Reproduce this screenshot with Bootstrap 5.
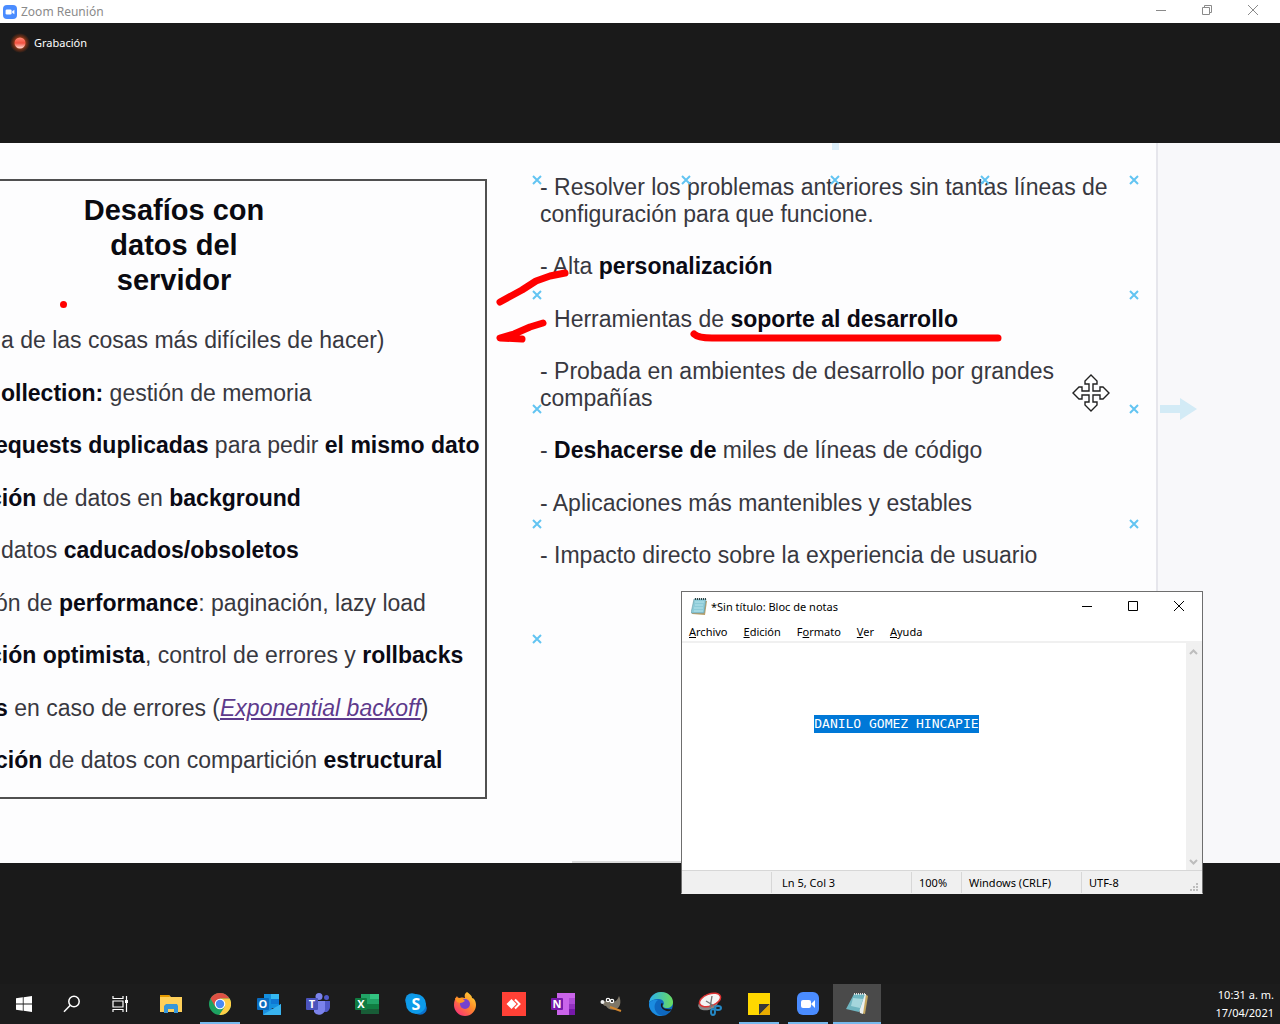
<!DOCTYPE html>
<html lang="es">
<head>
<meta charset="utf-8">
<meta name="viewport" content="width=device-width, initial-scale=1">
<title>Zoom Reunión</title>
<link href="https://cdn.jsdelivr.net/npm/bootstrap@5.3.0/dist/css/bootstrap.min.css" rel="stylesheet">
<style>
body { background: #1a1a1a; font: 12px/16px "Noto Sans", "Open Sans", sans-serif; overflow-x: hidden; }
button { border: 0; background: none; padding: 0; }
svg { display: block; flex: none; }
.ui-text { font-size: 11px; line-height: 16px; }
.win-title { height: 23px; padding-left: 3px; color: #8a8a8a; background: #fff; }
.win-title button { width: 46px; height: 20px; color: #8a8a8a; }
.rec-bar { height: 120px; padding: 12px; color: #fff; }
.slide { height: 720px; background: #f8f8fa; font: 23px/27px "Liberation Sans", Arial, sans-serif; color: #383840; }
.board { width: 1158px; background: #fdfdfe; border-right: 2px solid #e6e6ec; }
.challenge { width: 487px; height: 620px; margin-top: 36px; border: solid #505050; border-width: 2px 2px 2px 0; white-space: nowrap; }
.challenge h1 { width: 348px; margin: 12px 0 0; padding: 0; font-size: 29px; line-height: 35px; font-weight: 700; color: #0a0a10; }
.challenge ul { height: 447px; margin-top: 29px; }
.benefits { width: 580px; height: 395px; margin: 31px 0 0 53px; }
.slide strong { color: #0a0a14; }
.slide a { color: #5d3a8c; }
.cut-none { margin-left: 1px; }
.cut-s { margin-left: -5px; }
.cut-l { margin-left: -11px; }
.ink { left: 0; top: 0; pointer-events: none; }
.notepad { left: 681px; top: 591px; width: 522px; height: 303px; background: #fff; border: 1px solid #6e6e6e; border-bottom-color: #f0f0f0; color: #000; }
.np-title { height: 30px; padding-left: 9px; }
.np-title button { width: 46px; height: 28px; }
.np-menu { height: 21px; padding-left: 7px; gap: 16px; border-bottom: 2px solid #f0f0f0; }
.np-menu button { font-size: 11px; line-height: 16px; color: #000; }
.np-text { border: 0; outline: 0; resize: none; overflow: hidden; padding: 0 7px; font: 13px/18px "DejaVu Sans Mono", monospace; white-space: pre; color: #000; }
.np-text::selection { background: #0078d7; color: #fff; }
.np-scroll { width: 16px; background: #f0f0f0; padding: 6px 0 5px 3px; }
.np-status { height: 23px; background: #f0f0f0; border-top: 1px solid #d7d7d7; }
.np-status span { border-left: 1px solid #d7d7d7; padding: 3px 0 0 7px; margin-top: 1px; }
.np-status .s-pos { width: 140px; padding-left: 10px; margin-left: 89px; }
.np-status .s-zoom { width: 50px; }
.np-status .s-eol { width: 120px; }
.np-status .s-enc { flex: 1; }
.taskbar { height: 40px; background: #1c1c1c; }
.taskbar button { width: 48px; height: 40px; border-bottom: 3px solid transparent; padding-top: 2px; }
.taskbar svg { margin: 0 auto; }
.apps { gap: 1px; margin-left: 3px; }
.taskbar .is-open { background: linear-gradient(#76b9ed, #76b9ed) center bottom / 40px 2px no-repeat; background-origin: border-box; background-clip: border-box; }
.taskbar .is-active { background: linear-gradient(#76b9ed, #76b9ed) center bottom / 48px 2px no-repeat #4a4a4a; background-origin: border-box; background-clip: border-box; }
.clock { color: #fff; line-height: 18px; padding: 2px 6px 0 0; }
svg text { font-family: "Open Sans", sans-serif; font-weight: 700; fill: #fff; text-anchor: middle; }
</style>
<script src="https://cdn.jsdelivr.net/npm/bootstrap@5.3.0/dist/js/bootstrap.bundle.min.js"></script>
</head>
<body class="d-flex flex-column min-vh-100">
<header class="win-title d-flex align-items-center">
  <svg class="me-1" width="14" height="14" viewBox="0 0 14 14"><rect width="14" height="14" rx="4" fill="#4a8cff"/><rect x="2.600" y="4.500" width="6" height="5" rx="1.300" fill="#fff"/><path d="M9.200 6.300 11.400 4.700v4.600L9.200 7.700z" fill="#fff"/></svg>
  <span>Zoom Reunión</span>
  <div class="d-flex ms-auto pe-0 me-0 align-self-start">
    <button type="button" aria-label="Minimizar"><svg class="mx-auto" width="12" height="12" stroke="currentColor"><path d="M1 6.500h10"/></svg></button>
    <button type="button" aria-label="Restaurar"><svg class="mx-auto" width="12" height="12" fill="none" stroke="currentColor"><path d="M1.500 3.500h7v7h-7zM3.500 3.500v-2h7v7h-2"/></svg></button>
    <button type="button" aria-label="Cerrar" class="me-1"><svg class="mx-auto" width="12" height="12" stroke="currentColor"><path d="m1 1 10 10M11 1 1 11"/></svg></button>
  </div>
</header>

<div class="rec-bar d-flex align-items-start ui-text">
  <svg width="18" height="18" viewBox="0 0 18 18" class="me-1 overflow-visible"><defs><radialGradient id="glow"><stop offset=".4" stop-color="#b5441a"/><stop offset="1" stop-color="#a53a10" stop-opacity="0"/></radialGradient><linearGradient id="lamp" x2="0" y2="1"><stop stop-color="#ff8a78"/><stop offset=".5" stop-color="#f3503f"/><stop offset="1" stop-color="#ffe0d8"/></linearGradient></defs><circle cx="8" cy="8" r="10" fill="url(#glow)"/><circle cx="8" cy="8" r="5.500" fill="url(#lamp)"/></svg>
  <span>Grabación</span>
</div>

<main class="slide position-relative overflow-hidden">
  <div class="board d-flex align-items-start h-100">
    <section class="challenge flex-shrink-0">
      <h1 class="text-center">Desafíos con<br>datos del<br>servidor</h1>
      <ul class="list-unstyled mb-0 d-flex flex-column justify-content-between">
        <li class="cut-none">a de las cosas más difíciles de hacer)</li>
        <li class="cut-none"><strong>ollection:</strong> gestión de memoria</li>
        <li class="cut-s"><strong>equests duplicadas</strong> para pedir <strong>el mismo dato</strong></li>
        <li class="cut-l"><strong>ción</strong> de datos en <strong>background</strong></li>
        <li class="cut-none">datos <strong>caducados/obsoletos</strong></li>
        <li class="cut-s">ón de <strong>performance</strong>: paginación, lazy load</li>
        <li class="cut-l"><strong>ción optimista</strong>, control de errores y <strong>rollbacks</strong></li>
        <li class="cut-s"><strong>s</strong> en caso de errores (<a href="#backoff"><em>Exponential backoff</em></a>)</li>
        <li class="cut-s"><strong>ción</strong> de datos con compartición <strong>estructural</strong></li>
      </ul>
    </section>
    <ul class="benefits list-unstyled d-flex flex-column justify-content-between">
      <li>- Resolver los problemas anteriores sin tantas líneas de configuración para que funcione.</li>
      <li>- Alta <strong>personalización</strong></li>
      <li>- Herramientas de <strong>soporte al desarrollo</strong></li>
      <li>- Probada en ambientes de desarrollo por grandes compañías</li>
      <li>- <strong>Deshacerse de</strong> miles de líneas de código</li>
      <li>- Aplicaciones más mantenibles y estables</li>
      <li>- Impacto directo sobre la experiencia de usuario</li>
    </ul>
  </div>
  <svg class="ink position-absolute" width="1280" height="720" viewBox="0 143 1280 720" fill="none" aria-hidden="true">
    <defs><path id="pin" d="m-4-4 8 8M4-4l-8 8" stroke="#62c4f2" stroke-width="2"/></defs>
    <path d="M539 324h8" stroke="#fdfdfe" stroke-width="8"/>
    <path d="M832 143h7v7h-7z" fill="#dceefa"/>
    <path d="M1160 405h20v-7l17 11-17 11v-7h-20z" fill="#d3ebf6"/>
    <path d="M572 862h110" stroke="#dcdcdc" stroke-width="2"/>
    <use href="#pin" x="537" y="180"/><use href="#pin" x="686" y="180"/><use href="#pin" x="835" y="180"/><use href="#pin" x="985" y="180"/><use href="#pin" x="1134" y="180"/>
    <use href="#pin" x="537" y="295"/><use href="#pin" x="537" y="409"/><use href="#pin" x="537" y="524"/><use href="#pin" x="537" y="639"/>
    <use href="#pin" x="1134" y="295"/><use href="#pin" x="1134" y="409"/><use href="#pin" x="1134" y="524"/>
    <g stroke="#f00" stroke-width="7" stroke-linecap="round" stroke-linejoin="round">
      <path d="M500 302 522 290 536 281 550 276 565 273"/>
      <path d="M543 323 530 327 514 334 500 338 522 339"/>
      <path d="M694 334Q698 338 712 338H998"/>
    </g>
    <circle cx="63.500" cy="304.500" r="3.500" fill="#f00"/>
    <path d="M1091 375 1097 381V384H1093V391H1100V387H1103L1109 393 1103 399H1100V395H1093V402H1097V405L1091 411 1085 405V402H1089V395H1082V399H1079L1073 393 1079 387H1082V391H1089V384H1085V381Z" fill="#fff" stroke="#222" stroke-width="1.400"/>
  </svg>
</main>

<section class="notepad position-absolute d-flex flex-column" aria-label="Bloc de notas">
  <div class="np-title d-flex align-items-center ui-text">
    <svg width="16" height="18" viewBox="0 0 16 18" class="me-1"><path d="m3 2 13 1-2 14-13-1z" fill="#b9a06a"/><path d="M3 1h12l-2 14H0z" fill="#8ccbd8" stroke="#6899a5" stroke-width=".6"/><path d="M4 4h9M4 7h8M3 10h9M3 13h9" stroke="#b6e3eb"/><path d="M4 1h11" stroke="#344" stroke-width="2" stroke-dasharray="1 1"/></svg>
    <span>*Sin título: Bloc de notas</span>
    <div class="d-flex ms-auto align-self-start">
      <button type="button" aria-label="Minimizar"><svg class="mx-auto" width="12" height="12" stroke="#000"><path d="M1 6.500h10"/></svg></button>
      <button type="button" aria-label="Maximizar"><svg class="mx-auto" width="12" height="12" fill="none" stroke="#000"><path d="M1.500 1.500h9v9h-9z"/></svg></button>
      <button type="button" aria-label="Cerrar"><svg class="mx-auto" width="12" height="12" stroke="#000"><path d="m1 1 10 10M11 1 1 11"/></svg></button>
    </div>
  </div>
  <nav class="np-menu d-flex align-items-center" aria-label="Menú">
    <button type="button"><u>A</u>rchivo</button><button type="button"><u>E</u>dición</button><button type="button">F<u>o</u>rmato</button><button type="button"><u>V</u>er</button><button type="button"><u>A</u>yuda</button>
  </nav>
  <div class="d-flex flex-grow-1">
    <textarea class="np-text flex-grow-1" id="note" aria-label="Editor de texto" spellcheck="false">




		DANILO GOMEZ HINCAPIE</textarea>
    <div class="np-scroll d-flex flex-column justify-content-between" aria-hidden="true">
      <svg width="9" height="6" fill="none" stroke="#bdbdbd" stroke-width="2"><path d="m1 5 3.500-3.500L8 5"/></svg>
      <svg width="9" height="6" fill="none" stroke="#bdbdbd" stroke-width="2"><path d="m1 1 3.500 3.500L8 1"/></svg>
    </div>
  </div>
  <footer class="np-status d-flex ui-text">
    <span class="s-pos">Ln 5, Col 3</span><span class="s-zoom">100%</span><span class="s-eol">Windows (CRLF)</span><span class="s-enc">UTF-8</span>
    <svg class="align-self-end me-1" width="8" height="10" fill="#bdbdbd"><path d="M6 0h2v2H6zM3 3h2v2H3zM6 3h2v2H6zM0 6h2v2H0zM3 6h2v2H3zM6 6h2v2H6z"/></svg>
  </footer>
</section>

<footer class="taskbar d-flex mt-auto">
  <button type="button" aria-label="Inicio"><svg width="16" height="16" fill="#fff"><path d="M0 2.300 6.800 1.300V7.600H0zM7.600 1.200 16 0v7.600H7.600zM0 8.400h6.800v6.300L0 13.700zM7.600 8.400H16V16l-8.400-1.200z"/></svg></button>
  <button type="button" aria-label="Buscar"><svg width="18" height="18" fill="none" stroke="#fff" stroke-width="1.500"><circle cx="11" cy="6.500" r="5.200"/><path d="M7.300 10.200 1 16.700"/></svg></button>
  <button type="button" aria-label="Vista de tareas"><svg width="17" height="16" fill="none" stroke="#fff" stroke-width="1.200"><path d="M1 0v2.500h10V0M1 16v-2.500h10V16M1 5h10v6H1zM14.500 0v16"/><path d="M13 4h3v3h-3z" fill="#fff" stroke="none"/></svg></button>
  <div class="apps d-flex">
    <button type="button" aria-label="Explorador"><svg width="22" height="20"><path d="M0 1h9l2 2h11v15H0z" fill="#ffd05a"/><path d="M0 1h9l1 2H0z" fill="#e59a00"/><path d="M4 19v-7l2-2h11l1 2v7h-4v-4H8v4z" fill="#3897d8"/></svg></button>
    <button type="button" class="is-open" aria-label="Chrome"><svg width="22" height="22" viewBox="0 0 22 22"><circle cx="11" cy="11" r="11" fill="#1da261"/><path d="M11 0a11 11 0 0 1 9.600 5.600H11L6.300 13.700 1.500 5.500A11 11 0 0 1 11 0z" fill="#dd5144"/><path d="M20.600 5.600A11 11 0 0 1 10.300 22l5.400-8.300L11 5.600z" fill="#ffcd46"/><circle cx="11" cy="11" r="5.300" fill="#fff"/><circle cx="11" cy="11" r="4.200" fill="#4a8af4"/></svg></button>
    <button type="button" aria-label="Outlook"><svg width="24" height="22" viewBox="0 0 24 22"><path d="M7 1h15v14H7z" fill="#1490df"/><path d="M14 1h8v5h-8z" fill="#35b8f1"/><path d="M14 6h8v5h-8z" fill="#0f78d4"/><path d="M6 12h2l8 4 8-5v11H6z" fill="#1a8fe0"/><path d="m7 21 17-10v11H7z" fill="#39b4ef"/><rect y="5" width="12" height="12" rx="1" fill="#0a6cbf"/><text x="6" y="15" font-size="11">O</text></svg></button>
    <button type="button" aria-label="Teams"><svg width="24" height="22" viewBox="0 0 24 22"><circle cx="13" cy="3.500" r="3.500" fill="#7b83eb"/><circle cx="20.500" cy="4.500" r="2.500" fill="#5059c9"/><path d="M16 8h8v6a5 5 0 0 1-6 5z" fill="#5059c9"/><path d="M8 8h11v7a6 6 0 0 1-11 4z" fill="#7b83eb"/><rect y="5" width="12" height="12" rx="1" fill="#4b53bc"/><text x="6" y="15" font-size="11">T</text></svg></button>
    <button type="button" aria-label="Excel"><svg width="24" height="22" viewBox="0 0 24 22"><path d="M6 1h18v20H6z" fill="#21a366"/><path d="M15 1h9v5h-9z" fill="#33c481"/><path d="M6 11h18v5H6z" fill="#107c41"/><path d="M6 16h18v5H6z" fill="#185c37"/><rect y="5" width="12" height="12" rx="1" fill="#107c41"/><text x="6" y="15" font-size="11">X</text></svg></button>
    <button type="button" aria-label="Skype"><svg width="22" height="22" viewBox="0 0 22 22"><circle cx="7" cy="7" r="6.800" fill="#1296e4"/><circle cx="15" cy="15" r="6.800" fill="#0a72cf"/><circle cx="11" cy="11" r="10" fill="#0d9bea"/><text x="11" y="17" font-size="16">S</text></svg></button>
    <button type="button" aria-label="Firefox"><svg width="24" height="24" viewBox="0 0 24 24"><defs><linearGradient id="fx" x1="1" x2=".2" y2="1"><stop stop-color="#ffe43b"/><stop offset=".5" stop-color="#ff8a28"/><stop offset="1" stop-color="#f8307a"/></linearGradient></defs><path d="M14 0c4 3 5 4 5 6 2 0 4 3 4 7a11 11 0 0 1-22 0C1 9 2 7 4 4c1 2 1 2 3 2 2-1 4 0 5 0-1-3 0-5 2-6z" fill="url(#fx)"/><circle cx="12" cy="12" r="5" fill="#7542d0"/><path d="M2 6c4-1 8 0 10 3-2 1-3 2-5 2l-3-1z" fill="#ff9726"/></svg></button>
    <button type="button" aria-label="AnyDesk"><svg width="24" height="24"><path d="M0 0h24v24H0z" fill="#ff4136"/><path d="m4.500 12 5-5 5 5-5 5z" fill="#fff"/><path d="m13 7.500 4.500 4.500-4.500 4.500" fill="none" stroke="#fff" stroke-width="2"/></svg></button>
    <button type="button" aria-label="OneNote"><svg width="24" height="22" viewBox="0 0 24 22"><path d="M6 0h18v22H6z" fill="#ca64ea"/><path d="M18 5h6v6h-6z" fill="#ae4bd5"/><path d="M18 11h6v5h-6z" fill="#9332bf"/><path d="M18 16h6v6h-6z" fill="#7719aa"/><rect y="5" width="12" height="12" rx="1" fill="#7719aa"/><text x="6" y="15" font-size="11">N</text></svg></button>
    <button type="button" aria-label="GIMP"><svg width="24" height="18" viewBox="0 0 24 18"><path d="M2 6c3 1 4 0 5-1l5 2c4 0 6-3 7-6 2 4 2 9-1 12-4 3-10 2-12-2-2 0-4-2-4-5z" fill="#7d7668"/><circle cx="8" cy="5" r="2.300" fill="#fff"/><circle cx="12" cy="6" r="2.300" fill="#fff"/><circle cx="8" cy="5" r="1"/><circle cx="12" cy="6" r="1"/><circle cx="2.500" cy="7" r="2" fill="#eee"/><path d="m10 12 11 4" stroke="#d3862e" stroke-width="2"/></svg></button>
    <button type="button" aria-label="Edge"><svg width="24" height="24" viewBox="0 0 24 24"><defs><linearGradient id="ed"><stop stop-color="#2aaff0"/><stop offset="1" stop-color="#6bdc5c"/></linearGradient></defs><circle cx="12" cy="12" r="12" fill="#0e68c0"/><path d="M0 11C1 4 6 0 12 0c7 0 12 5 12 10 0 4-3 6-6 6-4 0-5-2-3-4 0-4-3-5-6-5-4 0-8 2-9 4z" fill="url(#ed)"/><path d="M9 8c-6 4-4 15 5 16C8 25 0 20 0 12 1 9 5 7 9 8z" fill="#1b8de0"/><path d="M14 12c-2 3 1 6 9 5l-2 2c-5 1-10-3-9-7 0-1 2-1 2 0z" fill="#1c1c1c"/></svg></button>
    <button type="button" aria-label="Recortes"><svg width="24" height="24" viewBox="0 0 24 24"><ellipse cx="10" cy="12" rx="10" ry="6" transform="rotate(-15 10 12)" fill="#888"/><ellipse cx="12" cy="8" rx="11" ry="6" transform="rotate(-20 12 8)" fill="#f4f4f4" stroke="#d33" stroke-width="1.500"/><path d="m8 9 10 6M14 4l-2 12" stroke="#777" stroke-width="1.400"/><g fill="none" stroke="#2487c4" stroke-width="2"><ellipse cx="20" cy="16" rx="3" ry="2"/><ellipse cx="15" cy="20" rx="2" ry="3"/></g></svg></button>
    <button type="button" class="is-open" aria-label="Notas rápidas"><svg width="22" height="22"><path d="M0 0h22v22H0z" fill="#ffd700"/><path d="M11 11h11L11 22z" fill="#383838"/><path d="M22 11v11H11z" fill="#e8ab00"/></svg></button>
    <button type="button" class="is-open" aria-label="Zoom"><svg width="24" height="24"><rect x="1" width="22" height="23" rx="6" fill="#4a8cff"/><rect x="5" y="8" width="10" height="8" rx="2" fill="#fff"/><path d="m15 12 4-4v8z" fill="#fff"/></svg></button>
    <button type="button" class="is-active" aria-label="Bloc de notas"><svg width="24" height="22" viewBox="0 0 24 22"><path d="m20 1 3 2-3 18-4-1z" fill="#c4a55d"/><path d="M9 1h12l-3 20-3-1z" fill="#e9f0ef"/><path d="M9 1h11l-6 18-13-3z" fill="#6fb5c0"/><path d="m8 5 10 1-3 9-9-2z" fill="#a4d6dc"/><path d="M9 1h12" stroke="#ddd" stroke-width="2" stroke-dasharray="1 1"/></svg></button>
  </div>
  <div class="clock ms-auto text-end ui-text">10:31 a. m.<br>17/04/2021</div>
</footer>
<script>
  const note = document.getElementById('note');
  note.focus({ preventScroll: true });
  note.setSelectionRange(note.value.indexOf('DANILO'), note.value.length);
</script>
</body>
</html>
